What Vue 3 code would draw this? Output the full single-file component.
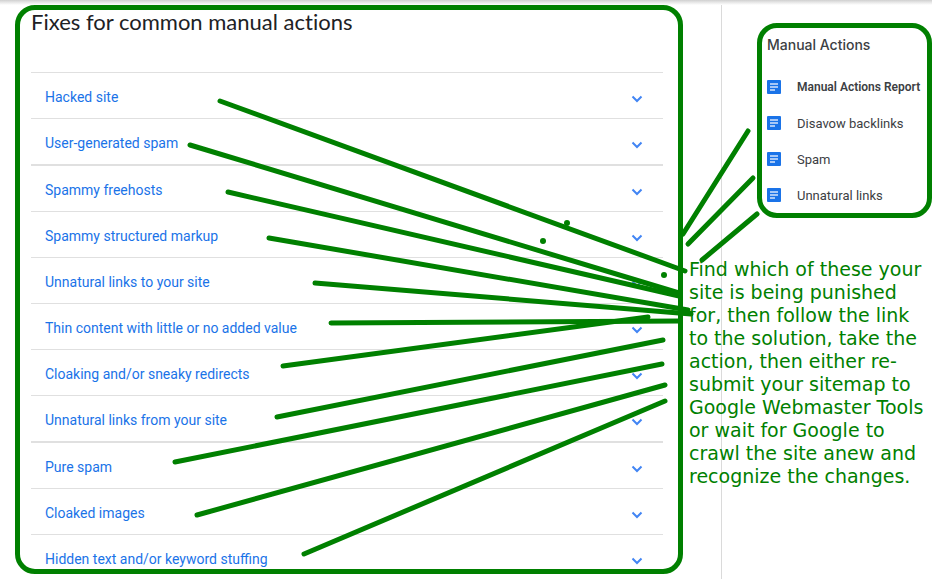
<script setup>
import { ref } from 'vue'

const fixes = [
  { title: 'Hacked site' },
  { title: 'User-generated spam' },
  { title: 'Spammy freehosts', heavy: true },
  { title: 'Spammy structured markup' },
  { title: 'Unnatural links to your site' },
  { title: 'Thin content with little or no added value' },
  { title: 'Cloaking and/or sneaky redirects' },
  { title: 'Unnatural links from your site' },
  { title: 'Pure spam', heavy: true },
  { title: 'Cloaked images' },
  { title: 'Hidden text and/or keyword stuffing' },
]

const related = [
  { title: 'Manual Actions Report', current: true },
  { title: 'Disavow backlinks' },
  { title: 'Spam' },
  { title: 'Unnatural links' },
]

const noteLines = [
  'Find which of these your',
  'site is being punished',
  'for, then follow the link',
  'to the solution, take the',
  'action, then either re-',
  'submit your sitemap to',
  'Google Webmaster Tools',
  'or wait for Google to',
  'crawl the site anew and',
  'recognize the changes.',
]

// Hand-drawn pointer strokes: x1, y1, x2, y2
const strokes = [
  [220, 101, 685, 271],
  [190, 145, 679, 293],
  [228, 192, 679, 296],
  [269, 238, 688, 310],
  [315, 283, 691, 314],
  [331, 323, 680, 321],
  [283, 366, 648, 317],
  [277, 417, 663, 340],
  [175, 462, 662, 364],
  [197, 515, 665, 385],
  [304, 554, 665, 401],
  [683, 234, 748, 131],
  [688, 244, 753, 178],
  [702, 260, 757, 214],
]

const dots = [
  [567, 223],
  [543, 241],
  [664, 275],
]

const selected = ref(-1)
</script>

<template>
  <div class="page">
    <main class="main">
      <section class="frame fixes">
        <h1 class="heading">Fixes for common manual actions</h1>
        <ul class="list">
          <li v-for="(fix, i) in fixes" :key="fix.title" class="item" :class="{ heavy: fix.heavy }">
            <button type="button" class="toggle" :aria-pressed="selected === i" @click="selected = i">
              <span>{{ fix.title }}</span>
              <svg class="chevron" viewBox="0 0 12 8" aria-hidden="true">
                <path d="M1.500 1.500 6 6l4.500-4.500" />
              </svg>
            </button>
          </li>
        </ul>
      </section>
    </main>

    <aside class="side">
      <nav class="frame related" aria-labelledby="related-title">
        <h2 id="related-title" class="related-title">Manual Actions</h2>
        <a
          v-for="link in related"
          :key="link.title"
          href="#"
          class="link"
          :class="{ current: link.current }"
        >
          <svg class="doc" viewBox="0 0 14 14" aria-hidden="true">
            <rect width="14" height="14" rx="1" fill="#1a73e8" />
            <path d="M3 4h8M3 7h8M3 10h5" stroke="#d6e5fb" stroke-width="1.600" />
          </svg>
          <span>{{ link.title }}</span>
        </a>
      </nav>
      <p class="note">
        <span v-for="line in noteLines" :key="line" class="note-line">{{ line }}</span>
      </p>
    </aside>

    <svg class="ink" viewBox="0 0 932 579" preserveAspectRatio="none" aria-hidden="true">
      <line
        v-for="(s, i) in strokes"
        :key="i"
        :x1="s[0]"
        :y1="s[1]"
        :x2="s[2]"
        :y2="s[3]"
      />
      <circle v-for="(d, i) in dots" :key="'d' + i" :cx="d[0]" :cy="d[1]" r="3" />
    </svg>
  </div>
</template>

<style>
body {
  margin: 0;
  background: #fff;
}
</style>

<style scoped>
.page {
  position: relative;
  display: flex;
  min-height: 100vh;
  font-family: Roboto, 'Liberation Sans', sans-serif;
  overflow: hidden;
}

.page::before {
  content: '';
  position: absolute;
  inset: 0 0 auto;
  height: 5px;
  background: linear-gradient(#cfcfcf, #e4e4e4 40%, #fff);
}

.frame {
  position: relative;
  box-sizing: border-box;
  border: 5px solid #008000;
  border-radius: 20px;
}

.main {
  flex: 1;
  min-width: 0;
  padding: 5px 38px 5px 15px;
}

.fixes {
  padding: 0 15px 0 11px;
}

.heading {
  margin: 0;
  padding: 0 0 38px;
  font-family: Lato, sans-serif;
  font-size: 22px;
  font-weight: 400;
  font-variant-ligatures: none;
  line-height: 24px;
  color: #202124;
}

.list {
  margin: 0;
  padding: 0;
  list-style: none;
}

.item {
  border-top: 1px solid #e0e0e0;
}

.item.heavy {
  border-top-width: 2px;
}

.toggle {
  display: flex;
  align-items: center;
  justify-content: space-between;
  width: 100%;
  padding: 14px 20px 11px 14px;
  border: 0;
  background: none;
  font: inherit;
  font-size: 14px;
  line-height: 20px;
  text-align: left;
  color: #1a73e8;
  cursor: pointer;
}

.item:last-child .toggle {
  padding-bottom: 0;
}

.chevron {
  width: 12px;
  height: 8px;
  margin-top: 4px;
  fill: none;
  stroke: #4285f4;
  stroke-width: 2;
}

.side {
  box-sizing: border-box;
  width: 211px;
  border-left: 1px solid #dadada;
}

.related {
  margin: 23px 0 0 35px;
  padding: 7px 0 0 5px;
  height: 195px;
}

.related-title {
  margin: 0 0 14px;
  font-family: Inter, sans-serif;
  font-size: 14px;
  font-weight: 500;
  line-height: 20px;
  color: #3c4043;
}

.link {
  display: flex;
  align-items: center;
  gap: 16px;
  height: 36px;
  font-size: 13px;
  white-space: nowrap;
  text-decoration: none;
  color: #3c4043;
}

.link.current {
  font-size: 12px;
  font-weight: 600;
}

.doc {
  flex: none;
  width: 14px;
  height: 14px;
}

.note {
  position: relative;
  z-index: 2;
  margin: 40px 0 0 -33px;
  font-family: 'DejaVu Sans', sans-serif;
  font-size: 19px;
  line-height: 23px;
  color: #008000;
}

.note-line {
  display: block;
  white-space: nowrap;
}

.ink {
  position: absolute;
  inset: 0;
  width: 100%;
  height: 100%;
  pointer-events: none;
  stroke: #008000;
  stroke-width: 5;
  stroke-linecap: round;
}

.ink circle {
  fill: #008000;
  stroke: none;
}
</style>
